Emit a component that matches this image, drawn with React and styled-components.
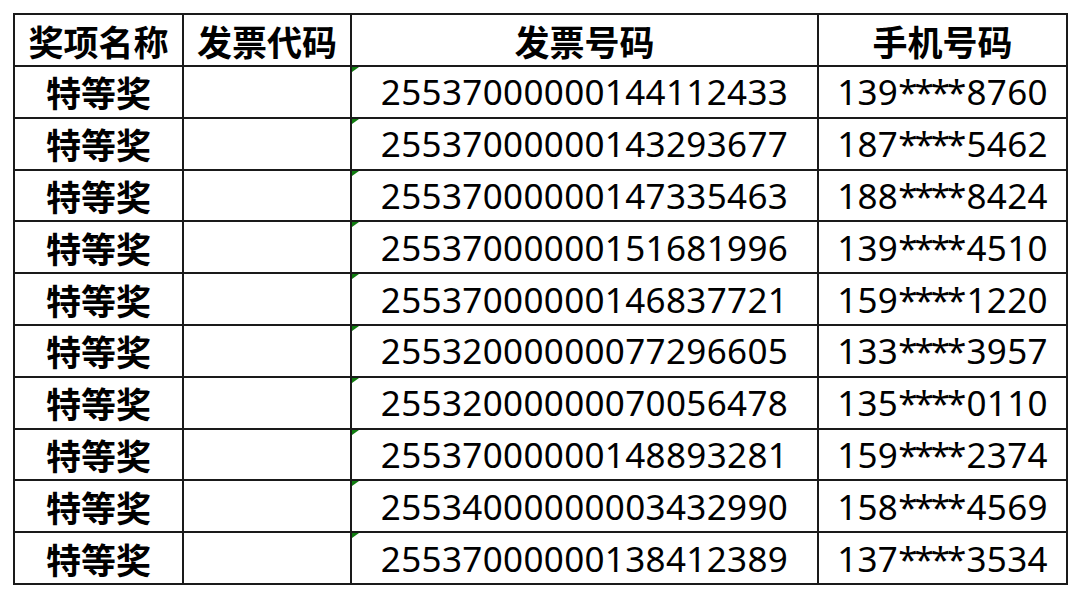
import React from 'react';
import styled, { createGlobalStyle } from 'styled-components';

const GlobalStyle = createGlobalStyle`
  body {
    margin: 0;
    background: #fff;
    font-family: "Noto Sans", "Noto Sans CJK SC", sans-serif;
  }
`;

const rows = [
  ['25537000000144112433', '139', '8760'],
  ['25537000000143293677', '187', '5462'],
  ['25537000000147335463', '188', '8424'],
  ['25537000000151681996', '139', '4510'],
  ['25537000000146837721', '159', '1220'],
  ['25532000000077296605', '133', '3957'],
  ['25532000000070056478', '135', '0110'],
  ['25537000000148893281', '159', '2374'],
  ['25534000000003432990', '158', '4569'],
  ['25537000000138412389', '137', '3534'],
];

const Page = styled.div`
  padding: 13px 0 0 13px;
`;

const Table = styled.table`
  border-collapse: collapse;
  table-layout: fixed;
  width: 1053px;
`;

const Col = styled.col`
  width: ${({ w }) => w}px;
`;

const HeadCell = styled.th`
  height: 50px;
  padding: 0;
  border: 2px solid #1a1a1a;
  font-family: "Noto Sans CJK SC", sans-serif;
  font-weight: 700;
  font-size: 35px;
  line-height: 1;
  color: #000;
  text-align: center;
  white-space: nowrap;
`;

const Cell = styled.td`
  position: relative;
  height: 49.8px;
  padding: 0;
  border: 2px solid #1a1a1a;
  text-align: center;
  white-space: nowrap;
  color: #000;
  font-family: ${({ bold }) => (bold ? '"Noto Sans CJK SC", sans-serif' : '"Noto Sans", sans-serif')};
  font-weight: ${({ bold }) => (bold ? 700 : 400)};
  font-size: 35px;
  letter-spacing: ${({ bold }) => (bold ? '0' : '0.35px')};
  line-height: 1;
`;

const Stars = styled.span`
  letter-spacing: -3px;
  margin-right: 3px;
`;

const Marker = styled.span`
  position: absolute;
  top: 0;
  left: 0;
  width: 0;
  height: 0;
  border-top: 5px solid #107c10;
  border-right: 7px solid transparent;
`;

export default function App() {
  return (
    <Page>
      <GlobalStyle />
      <Table>
        <colgroup>
          <Col w={169} />
          <Col w={168} />
          <Col w={467} />
          <Col w={249} />
        </colgroup>
        <thead>
          <tr>
            <HeadCell>奖项名称</HeadCell>
            <HeadCell>发票代码</HeadCell>
            <HeadCell>发票号码</HeadCell>
            <HeadCell>手机号码</HeadCell>
          </tr>
        </thead>
        <tbody>
          {rows.map(([invoice, head, tail]) => (
            <tr key={invoice}>
              <Cell bold>特等奖</Cell>
              <Cell />
              <Cell>
                <Marker />
                {invoice}
              </Cell>
              <Cell>
                {head}
                <Stars>****</Stars>
                {tail}
              </Cell>
            </tr>
          ))}
        </tbody>
      </Table>
    </Page>
  );
}
